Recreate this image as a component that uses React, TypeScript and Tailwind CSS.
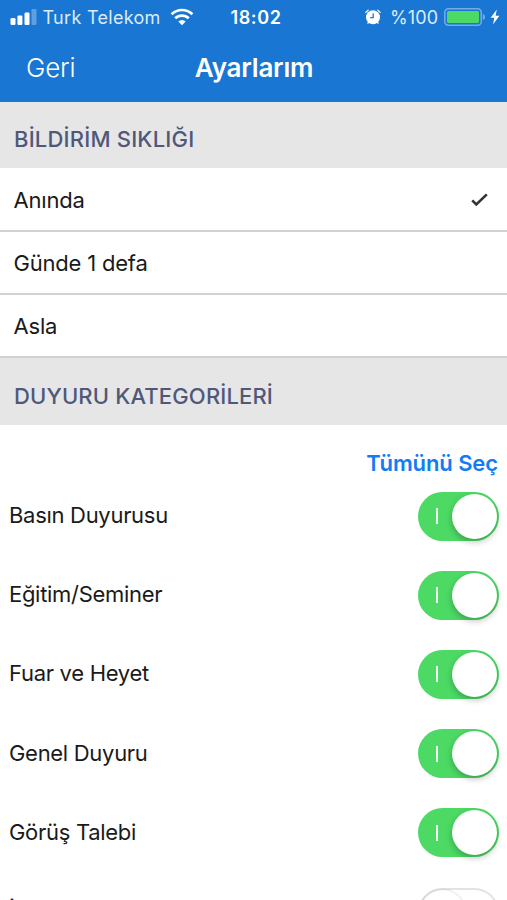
import { clsx } from "clsx";

const frequencies = [
   { title: "Anında", selected: true, className: "h-[64px]" },
   { title: "Günde 1 defa", selected: false, className: "h-[63px]" },
   { title: "Asla", selected: false, className: "h-[63px]" },
];

const categories = [
   { title: "Basın Duyurusu", enabled: true },
   { title: "Eğitim/Seminer", enabled: true },
   { title: "Fuar ve Heyet", enabled: true },
   { title: "Genel Duyuru", enabled: true },
   { title: "Görüş Talebi", enabled: true },
   { title: "İ", enabled: false },
];

function SignalIcon() {
   return (
      <svg width="27" height="17" viewBox="0 0 27 17" fill="white">
         <rect x="0.5" y="9" width="5" height="7" rx="1.2" />
         <rect x="7.4" y="6.5" width="5" height="9.5" rx="1.2" />
         <rect x="14.5" y="3.5" width="5" height="12.5" rx="1.2" />
         <rect x="21.5" y="0" width="5" height="16" rx="1.2" opacity="0.3" />
      </svg>
   );
}

function WifiIcon() {
   return (
      <svg width="24" height="18" viewBox="0 0 24 18" fill="none" stroke="white" strokeWidth="2.7">
         <path d="M1.6 6.2a15 15 0 0 1 20.8 0" />
         <path d="M5.2 10.3a9.8 9.8 0 0 1 13.6 0" />
         <path d="M12 17.3 8.3 13.5a5.3 5.3 0 0 1 7.4 0Z" fill="white" stroke="none" />
      </svg>
   );
}

function AlarmIcon() {
   return (
      <svg width="16" height="16" viewBox="0 0 16 16" fill="none">
         <circle cx="8" cy="8.3" r="7" fill="white" />
         <path d="M0.8 3.4 3.2 1.1M15.2 3.4 12.8 1.1" stroke="white" strokeWidth="1.3" strokeLinecap="round" />
         <path d="M8.2 4.4v4.3H5.2" stroke="#1976d2" strokeWidth="1.3" />
         <path d="m3.6 13-1 1.6M12.4 13l1 1.6" stroke="white" strokeWidth="1.3" />
      </svg>
   );
}

function BatteryIcon() {
   return (
      <svg width="42" height="18" viewBox="0 0 42 18" fill="none">
         <rect x="0.8" y="0.8" width="36.4" height="16.4" rx="3.5" stroke="#74ace5" strokeWidth="1.5" />
         <rect x="3" y="3" width="32" height="12" rx="1.5" fill="#4cd964" />
         <path d="M38.8 6v6c1.5-.5 2.3-1.6 2.3-3s-.8-2.5-2.3-3Z" fill="#74ace5" />
      </svg>
   );
}

function BoltIcon() {
   return (
      <svg width="10" height="16" viewBox="0 0 10 16" fill="white">
         <path d="M6.8 0.5 0.6 8.8h3.7L3 15.5l6.4-8.7H5.6Z" />
      </svg>
   );
}

function StatusBar() {
   return (
      <div className="flex h-[34px] items-center pl-[9.5px] text-white">
         <SignalIcon />
         <span className="ml-[6px] w-[119px] text-[18px] tracking-[0.3px] whitespace-nowrap text-[#dcecfa]">Turk Telekom</span>
         <span className="ml-[8px]">
            <WifiIcon />
         </span>
         <span className="ml-[37px] w-[54px] text-[18px] font-semibold tracking-[0.6px]">18:02</span>
         <span className="ml-[80.5px]">
            <AlarmIcon />
         </span>
         <span className="ml-[9px] w-[50px] text-[18px] tracking-[0.1px] whitespace-nowrap text-[#dcecfa]">%100</span>
         <span className="ml-[4px]">
            <BatteryIcon />
         </span>
         <span className="ml-[4px]">
            <BoltIcon />
         </span>
      </div>
   );
}

function SectionTitle({ children, className }: { children: string; className?: string }) {
   return (
      <h2 className={clsx("flex items-center bg-[#e6e6e6] pl-[14px] text-[22px] font-medium text-[#50587a]", className)}>
         {children}
      </h2>
   );
}

function Toggle({ enabled }: { enabled: boolean }) {
   return (
      <button
         type="button"
         role="switch"
         aria-checked={enabled}
         className={clsx(
            "flex h-[49px] w-[81px] shrink-0 items-center rounded-full",
            enabled ? "bg-[#4cd964] pr-[2px] pl-[18px]" : "border-2 border-[#e3e3e3] bg-white"
         )}
      >
         {enabled && <span className="h-[16px] w-[1.5px] bg-white/90" />}
         <span
            className={clsx(
               "size-[45px] rounded-full bg-white",
               enabled ? "ml-auto shadow-[0_3px_6px_rgba(0,0,0,0.25)]" : "shadow-[0_0_3px_rgba(0,0,0,0.2)]"
            )}
         />
      </button>
   );
}

export default function App() {
   return (
      <div className="h-[900px] w-[507px] overflow-hidden bg-white font-['Inter','Liberation_Sans',sans-serif] text-[#1a1a1a]">
         <header className="h-[102px] bg-[#1976d2] text-white">
            <StatusBar />
            <div className="grid h-[67px] grid-cols-3 items-center">
               <button type="button" className="pl-[26px] text-left text-[26px] font-[350] tracking-[-0.2px]">
                  Geri
               </button>
               <h1 className="pl-px text-center text-[26px] font-semibold tracking-[-0.2px]">Ayarlarım</h1>
            </div>
         </header>

         <SectionTitle className="h-[66px] pt-[8px] tracking-[0.2px]">BİLDİRİM SIKLIĞI</SectionTitle>
         <ul>
            {frequencies.map((item) => (
               <li
                  key={item.title}
                  className={clsx(
                     "flex items-center justify-between border-b-2 border-[#d2d2d2] pt-[2px] pr-[19px] pl-[13.5px] text-[22px] tracking-[-0.2px]",
                     item.className
                  )}
               >
                  <span>{item.title}</span>
                  {item.selected && (
                     <svg width="17" height="14" viewBox="0 0 17 14" fill="none" stroke="#333" strokeWidth="2.6">
                        <path d="m1.2 7.3 4.1 4.2L15.8 1.4" />
                     </svg>
                  )}
               </li>
            ))}
         </ul>

         <SectionTitle className="h-[67px] pt-[10px] tracking-[0.15px]">DUYURU KATEGORİLERİ</SectionTitle>
         <div className="flex h-[51.5px] items-end justify-end pr-[9px]">
            <button type="button" className="text-[22px] leading-[28px] font-semibold tracking-[-0.1px] text-[#117cf6]">
               Tümünü Seç
            </button>
         </div>
         <ul>
            {categories.map((item) => (
               <li
                  key={item.title}
                  className="flex h-[79.2px] items-center justify-between pr-[8px] pl-[9px] text-[22px] tracking-[-0.3px]"
               >
                  <span className="pb-px">{item.title}</span>
                  <Toggle enabled={item.enabled} />
               </li>
            ))}
         </ul>
      </div>
   );
}
